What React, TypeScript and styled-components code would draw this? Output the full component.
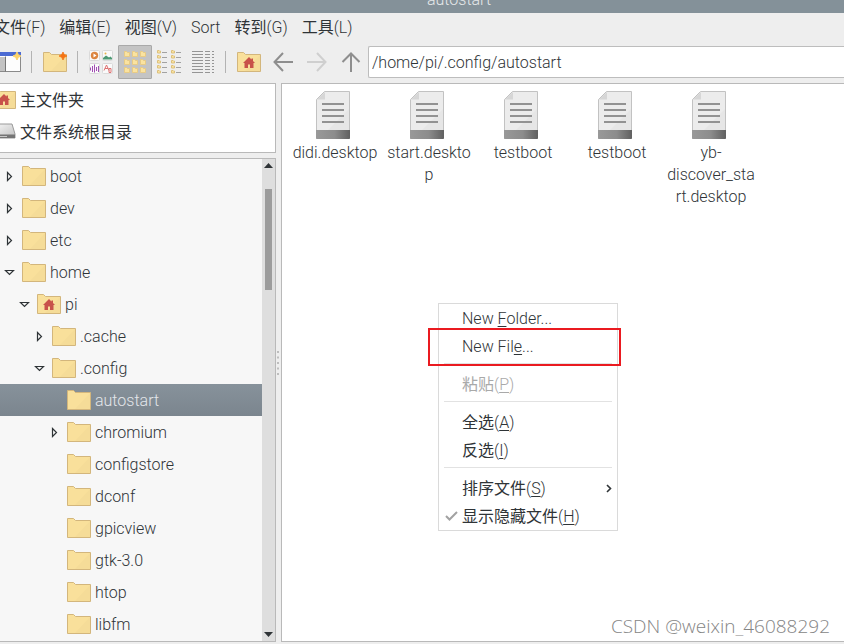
import React from "react";
import styled, { createGlobalStyle } from "styled-components";

const INK = "#2f3437";
const LINE = "#b9b9b9";

const GlobalStyle = createGlobalStyle`
  *, *::before, *::after { box-sizing: border-box; }
  html, body { margin: 0; height: 100%; overflow: hidden; }
  body, button, input {
    font-family: Roboto, "Noto Sans CJK SC", sans-serif;
    font-size: 16px;
    font-weight: 300;
    color: ${INK};
  }
  button { border: 0; padding: 0; background: none; }
  ul { list-style: none; margin: 0; padding: 0; }
  svg { display: block; flex: none; }
`;

const Window = styled.div`
  display: flex;
  flex-direction: column;
  height: 100vh;
  padding-bottom: 2px;
  background: #eeeeee;
  overflow: hidden;
`;

const TitleBar = styled.header`
  flex: none;
  height: 13px;
  padding-left: 74px;
  overflow: hidden;
  background: #849199;
  text-align: center;
`;

const Title = styled.h1`
  margin: -10px 0 0;
  font-size: 16px;
  font-weight: 300;
  line-height: 20px;
  color: #e4e8ea;
`;

const MenuBar = styled.nav`
  display: flex;
  flex: none;
  gap: 14px;
  margin-left: -6px;
  height: 29px;
`;

const MenuButton = styled.button`
  line-height: 28px;
  white-space: nowrap;
`;

const Han = styled.span`
  font-weight: 400;
`;

const ToolBar = styled.div`
  display: flex;
  flex: none;
  align-items: center;
  height: 41px;
  margin-left: -8px;
  padding-bottom: 1px;
`;

const ToolButton = styled.button<{ $active?: boolean }>`
  display: flex;
  flex: none;
  align-items: center;
  justify-content: center;
  width: 34px;
  height: 34px;
  border: 1px solid ${(p) => (p.$active ? "#a9a9a9" : "transparent")};
  border-radius: 1px;
  background: ${(p) => (p.$active ? "#c4c4c4" : "transparent")};
`;

const ToolDivider = styled.span`
  flex: none;
  width: 1px;
  height: 22px;
  margin: 0 6px 0 5px;
  background: #b3b3b3;
`;

const PathInput = styled.input`
  flex: 1;
  min-width: 0;
  height: 32px;
  padding: 0 3px;
  border: 1px solid #bdbdbd;
  border-right: 0;
  border-radius: 2px 0 0 2px;
  background: #fff;
  outline: none;
`;

const Body = styled.div`
  display: flex;
  flex: 1;
  min-height: 0;
`;

const Sidebar = styled.aside`
  display: flex;
  flex: none;
  flex-direction: column;
  gap: 5px;
  width: 276px;
`;

const Places = styled.ul`
  flex: none;
  padding: 0 0 4px;
  border: 1px solid ${LINE};
  border-left: 0;
  background: #fff;
`;

const Place = styled.li`
  display: flex;
  align-items: center;
  gap: 4px;
  height: 32px;
  margin-left: -8px;
  padding-bottom: 2px;
`;

const TreeFrame = styled.div`
  display: flex;
  flex: 1;
  min-height: 0;
  border: 1px solid ${LINE};
  border-left: 0;
`;

const Tree = styled.ul`
  flex: 1;
  padding: 1px 0;
  overflow: hidden;
  background: #f7f7f7;
`;

const TreeRow = styled.li<{ $level: number; $selected?: boolean }>`
  display: flex;
  align-items: center;
  gap: 4px;
  height: 32px;
  padding-left: ${(p) => p.$level * 15 + 2}px;
  color: ${(p) => (p.$selected ? "#e3e6ea" : INK)};
  background: ${(p) => (p.$selected ? "linear-gradient(#87929b, #7b858e)" : "none")};
`;

const Expander = styled.button`
  display: flex;
  flex: none;
  align-items: center;
  width: 16px;
  height: 16px;
  padding-left: 2px;
`;

const ScrollBar = styled.div`
  display: flex;
  flex: none;
  flex-direction: column;
  align-items: center;
  justify-content: space-between;
  width: 13px;
  padding: 4px 0;
  background: #dedede;
`;

const ScrollTrack = styled.div`
  flex: 1;
  width: 7px;
  padding: 21px 0;
`;

const ScrollThumb = styled.div`
  height: 101px;
  background: #9c9c9c;
`;

const Splitter = styled.div`
  display: flex;
  flex: none;
  align-items: center;
  width: 5px;
  padding-left: 1px;
`;

const FilePane = styled.main`
  position: relative;
  flex: 1;
  min-width: 0;
  padding: 7px 6px;
  border: 1px solid ${LINE};
  border-right: 0;
  background: #fff;
`;

const FileGrid = styled.ul`
  display: grid;
  grid-template-columns: repeat(auto-fill, 94px);
`;

const FileItem = styled.li`
  display: flex;
  flex-direction: column;
  align-items: center;
  gap: 3px;
`;

const FileName = styled.span`
  width: 90px;
  line-height: 22px;
  text-align: center;
  overflow-wrap: anywhere;
`;

const ContextMenu = styled.div`
  position: absolute;
  top: 219px;
  left: 156px;
  width: 180px;
  border: 1px solid #dadada;
  background: #fff;
`;

const ContextItem = styled.button`
  display: flex;
  align-items: center;
  width: 100%;
  height: 28px;
  padding-right: 5px;
  text-align: left;
  white-space: nowrap;

  &:disabled { color: #a9a9a9; }
`;

const CheckSlot = styled.span`
  display: flex;
  flex: none;
  justify-content: center;
  width: 23px;
  padding-left: 2px;
`;

const ItemText = styled.span`
  flex: 1;
  padding-top: 2px;
  line-height: 26px;
  u { text-underline-offset: 2px; text-decoration-thickness: 1px; }
`;

const MenuDivider = styled.hr`
  height: 1px;
  margin: 3px 5px 6px;
  border: 0;
  background: #e2e2e2;
`;

const Highlight = styled.div`
  position: absolute;
  top: 24px;
  left: -11px;
  width: 193px;
  height: 38px;
  border: 2px solid #ea1a20;
  pointer-events: none;
`;

const Watermark = styled.span`
  position: absolute;
  right: 14px;
  bottom: 4px;
  font-family: "Open Sans", sans-serif;
  font-size: 19px;
  line-height: 22px;
  color: #858585;
`;

const FolderShape = () => (
  <>
    <path d="M.5 19.500V.5h6l2 2h15v17z" fill="#f9e09b" stroke="#d3b67c" />
    <path d="M23 3v16H8z" fill="#f5dc98" />
  </>
);

const FolderIcon = () => (
  <svg width="24" height="20" viewBox="0 0 24 20"><FolderShape /></svg>
);

const HomeIcon = () => (
  <svg width="24" height="20" viewBox="0 0 24 20">
    <FolderShape />
    <path d="M12 5l2.500 2.500V6.500h1.500v2.500l2 2h-1.500v5H13v-3.500h-2V16H7.500v-5H6z" fill="#c8524a" />
  </svg>
);

const NewFolderIcon = () => (
  <svg width="24" height="20" viewBox="0 0 24 20">
    <FolderShape />
    <path d="M20 0l1.300 2.700L24 4l-2.700 1.300L20 8l-1.300-2.700L16 4l2.700-1.300z" fill="#f57314" stroke="#f57314" strokeWidth=".8" />
  </svg>
);

const NewWindowIcon = () => (
  <svg width="26" height="20" viewBox="0 0 26 20">
    <path d="M.5.5h24v19H.5z" fill="#fdfdfd" stroke="#8a8a8a" />
    <path d="M0 0h25v4H0z" fill="#4c6bd3" />
    <path d="M1 5h9v14H1z" fill="#c3c3c3" />
    <path d="M9.500 4.500v15" stroke="#777" />
    <path d="M21 0l1.300 2.700L25 4l-2.700 1.300L21 8l-1.300-2.700L17 4l2.700-1.300z" fill="#fdd46a" stroke="#fdd46a" />
  </svg>
);

const ThumbnailIcon = () => (
  <svg width="24" height="24" viewBox="0 0 24 24">
    <g fill="#fafafa" stroke="#dadada">
      <rect x=".5" y=".5" width="10" height="10" rx="1" />
      <rect x="13.500" y=".5" width="10" height="10" rx="1" />
      <rect x=".5" y="13.500" width="10" height="10" rx="1" />
      <rect x="13.500" y="13.500" width="10" height="10" rx="1" />
    </g>
    <circle cx="5.500" cy="5.500" r="3.700" fill="#dc8540" />
    <path d="M4.500 3.500l3 2-3 2z" fill="#fff" />
    <path d="M14 9.500V8l3-2.500 3 2 1.500-1L23 8v1.500z" fill="#4d9974" />
    <circle cx="16.500" cy="3.500" r="1" fill="#e8b34c" />
    <path d="M1.500 17.500v3M3.500 16v6M5.500 14.500v8M7.500 17v4M9.500 16v6" stroke="#a14db4" />
    <path d="M15 20.500l2.500-5.500 2.500 5.500M16 18.500h3M20 18.500h2v4h-2z" fill="none" stroke="#df7070" />
  </svg>
);

const IconViewIcon = () => (
  <svg width="24" height="24" viewBox="0 0 24 24">
    {[1, 9, 17].map((y) =>
      [1, 9, 17].map((x) => (
        <path key={`${x}-${y}`} d={`M${x + 0.5} ${y + 0.5}h2l1 1h2v4h-5z`} fill="#fae3a0" stroke="#e8cb85" />
      )),
    )}
  </svg>
);

const CompactViewIcon = () => (
  <svg width="26" height="24" viewBox="0 0 26 24">
    {[0, 5, 10, 15, 20].map((y) =>
      [1, 15].map((x) => (
        <g key={`${x}-${y}`}>
          <path d={`M${x + 0.5} ${y + 0.5}h1.500l.5.500h1v2h-3z`} fill="#fae3a0" stroke="#dcc07c" />
          <path d={`M${x + 5} ${y + 2.5}h5`} stroke="#a2a2a2" />
        </g>
      )),
    )}
  </svg>
);

const DetailViewIcon = () => (
  <svg width="22" height="24" viewBox="0 0 22 24">
    {[1, 4, 7, 10, 13, 16, 19, 22].map((y) => (
      <path key={y} d={`M0 ${y + 0.5}h11m2 0h5m2 0h2`} stroke="#959595" />
    ))}
  </svg>
);

const ArrowIcon = ({ direction }: { direction: "back" | "forward" | "up" }) => {
  const paths = {
    back: "M20 10H2M10 1L1.500 10l8.500 9",
    forward: "M0 10h18M10 1l8.500 9-8.500 9",
    up: "M10 20V2M1.500 10L10 1.500 18.500 10",
  };
  return (
    <svg width="20" height="20" viewBox="0 0 20 20">
      <path d={paths[direction]} fill="none" stroke={direction === "forward" ? "#cfcfcf" : "#8e8e8e"} strokeWidth="2" />
    </svg>
  );
};

const DriveIcon = () => (
  <svg width="24" height="20" viewBox="0 0 24 20">
    <defs>
      <linearGradient id="drive" x1="0" y1="0" x2="1" y2="1">
        <stop offset="0" stopColor="#f8f8f8" />
        <stop offset="1" stopColor="#c0c0c0" />
      </linearGradient>
    </defs>
    <path d="M4 3h16l3 10v4H1v-4z" fill="url(#drive)" stroke="#9a9a9a" />
    <path d="M1 13.500h22V17H1z" fill="#757575" />
    <path d="M3 15.500h12" stroke="#c9c9c9" />
  </svg>
);

const DocumentIcon = () => (
  <svg width="48" height="48" viewBox="0 0 48 48">
    <defs>
      <linearGradient id="docBase">
        <stop offset="0" stopColor="#999" />
        <stop offset=".55" stopColor="#8c8c8c" />
        <stop offset="1" stopColor="#606060" />
      </linearGradient>
    </defs>
    <path d="M5.500 47.500V8.500l8-8h25v47z" fill="#ececec" stroke="#c2c2c2" />
    <path d="M38 18v21H17z" fill="#e6e6e6" />
    <path d="M6 8.500h8V1z" fill="#d6d6d6" />
    <path d="M5 39h34v8q0 1-1 1H6q-1 0-1-1z" fill="url(#docBase)" />
    <path d="M11 13h22M11 19h22M11 25h22M11 31h22" stroke="#929292" strokeWidth="2" />
  </svg>
);

const Triangle = ({ open }: { open: boolean }) => (
  <svg width="11" height="11" viewBox="0 0 11 11">
    <path d={open ? "M1.500 3.500h8l-4 4z" : "M3.500 1.500v8L7.500 5.500z"} fill="none" stroke={INK} strokeWidth="1.200" />
  </svg>
);

const ScrollArrow = ({ down }: { down?: boolean }) => (
  <svg width="9" height="5" viewBox="0 0 9 5">
    <path d={down ? "M0 0h9L4.500 5z" : "M0 5h9L4.500 0z"} fill={INK} />
  </svg>
);

const Check = () => (
  <svg width="13" height="10" viewBox="0 0 13 10">
    <path d="M1 5l3.500 3.500L12 1" fill="none" stroke="#a2a2a2" strokeWidth="2" />
  </svg>
);

const Chevron = () => (
  <svg width="6" height="9" viewBox="0 0 6 9">
    <path d="M1 1l3.500 3.500L1 8" fill="none" stroke={INK} strokeWidth="1.600" />
  </svg>
);

const menus = [
  { han: "文件", rest: "(F)" },
  { han: "编辑", rest: "(E)" },
  { han: "视图", rest: "(V)" },
  { han: "", rest: "Sort" },
  { han: "转到", rest: "(G)" },
  { han: "工具", rest: "(L)" },
];

type Node = { name: string; level: number; open?: boolean; home?: boolean; selected?: boolean };

const tree: Node[] = [
  { name: "boot", level: 0, open: false },
  { name: "dev", level: 0, open: false },
  { name: "etc", level: 0, open: false },
  { name: "home", level: 0, open: true },
  { name: "pi", level: 1, open: true, home: true },
  { name: ".cache", level: 2, open: false },
  { name: ".config", level: 2, open: true },
  { name: "autostart", level: 3, selected: true },
  { name: "chromium", level: 3, open: false },
  { name: "configstore", level: 3 },
  { name: "dconf", level: 3 },
  { name: "gpicview", level: 3 },
  { name: "gtk-3.0", level: 3 },
  { name: "htop", level: 3 },
  { name: "libfm", level: 3 },
];

const files = ["didi.desktop", "start.desktop", "testboot", "testboot", "yb-discover_start.desktop"];

type EntryProps = {
  han?: string;
  before: string;
  mnemonic: string;
  after: string;
  disabled?: boolean;
  checked?: boolean;
  submenu?: boolean;
};

const Entry = ({ han, before, mnemonic, after, disabled, checked, submenu }: EntryProps) => (
  <ContextItem
    role={checked ? "menuitemcheckbox" : "menuitem"}
    aria-checked={checked}
    aria-haspopup={submenu ? "menu" : undefined}
    disabled={disabled}
  >
    <CheckSlot>{checked && <Check />}</CheckSlot>
    <ItemText>{han && <Han>{han}</Han>}{before}<u>{mnemonic}</u>{after}</ItemText>
    {submenu && <Chevron />}
  </ContextItem>
);

export default function App() {
  return (
    <Window>
      <GlobalStyle />
      <TitleBar><Title>autostart</Title></TitleBar>
      <MenuBar>
        {menus.map((m) => (
          <MenuButton key={m.rest}>{m.han && <Han>{m.han}</Han>}{m.rest}</MenuButton>
        ))}
      </MenuBar>
      <ToolBar role="toolbar">
        <ToolButton aria-label="New window"><NewWindowIcon /></ToolButton>
        <ToolDivider />
        <ToolButton aria-label="New folder"><NewFolderIcon /></ToolButton>
        <ToolDivider />
        <ToolButton aria-label="Thumbnail view"><ThumbnailIcon /></ToolButton>
        <ToolButton aria-label="Icon view" aria-pressed $active><IconViewIcon /></ToolButton>
        <ToolButton aria-label="Compact view"><CompactViewIcon /></ToolButton>
        <ToolButton aria-label="Detailed view"><DetailViewIcon /></ToolButton>
        <ToolDivider />
        <ToolButton aria-label="Home"><HomeIcon /></ToolButton>
        <ToolButton aria-label="Back"><ArrowIcon direction="back" /></ToolButton>
        <ToolButton aria-label="Forward" disabled><ArrowIcon direction="forward" /></ToolButton>
        <ToolButton aria-label="Up"><ArrowIcon direction="up" /></ToolButton>
        <PathInput aria-label="Path" defaultValue="/home/pi/.config/autostart" spellCheck={false} />
      </ToolBar>
      <Body>
        <Sidebar>
          <Places>
            <Place><HomeIcon /><Han>主文件夹</Han></Place>
            <Place><DriveIcon /><Han>文件系统根目录</Han></Place>
          </Places>
          <TreeFrame>
            <Tree role="tree">
              {tree.map((n) => (
                <TreeRow
                  key={n.name}
                  role="treeitem"
                  aria-level={n.level + 1}
                  aria-expanded={n.open}
                  aria-selected={!!n.selected}
                  $level={n.level}
                  $selected={n.selected}
                >
                  {n.open === undefined
                    ? <Expander as="span" />
                    : <Expander aria-label={`Toggle ${n.name}`}><Triangle open={n.open} /></Expander>}
                  {n.home ? <HomeIcon /> : <FolderIcon />}
                  <span>{n.name}</span>
                </TreeRow>
              ))}
            </Tree>
            <ScrollBar>
              <ScrollArrow />
              <ScrollTrack><ScrollThumb /></ScrollTrack>
              <ScrollArrow down />
            </ScrollBar>
          </TreeFrame>
        </Sidebar>
        <Splitter>
          <svg width="2" height="24" viewBox="0 0 2 24">
            {[0, 5.5, 11, 16.5, 22].map((y) => <rect key={y} y={y} width="2" height="2" fill="#bdbdbd" />)}
          </svg>
        </Splitter>
        <FilePane>
          <FileGrid>
            {files.map((f, i) => (
              <FileItem key={i}><DocumentIcon /><FileName>{f}</FileName></FileItem>
            ))}
          </FileGrid>
          <ContextMenu role="menu">
            <Entry before="New " mnemonic="F" after="older..." />
            <Entry before="New Fil" mnemonic="e" after="..." />
            <MenuDivider />
            <Entry han="粘贴" before="(" mnemonic="P" after=")" disabled />
            <MenuDivider />
            <Entry han="全选" before="(" mnemonic="A" after=")" />
            <Entry han="反选" before="(" mnemonic="I" after=")" />
            <MenuDivider />
            <Entry han="排序文件" before="(" mnemonic="S" after=")" submenu />
            <Entry han="显示隐藏文件" before="(" mnemonic="H" after=")" checked />
            <Highlight />
          </ContextMenu>
          <Watermark>CSDN @weixin_46088292</Watermark>
        </FilePane>
      </Body>
    </Window>
  );
}
